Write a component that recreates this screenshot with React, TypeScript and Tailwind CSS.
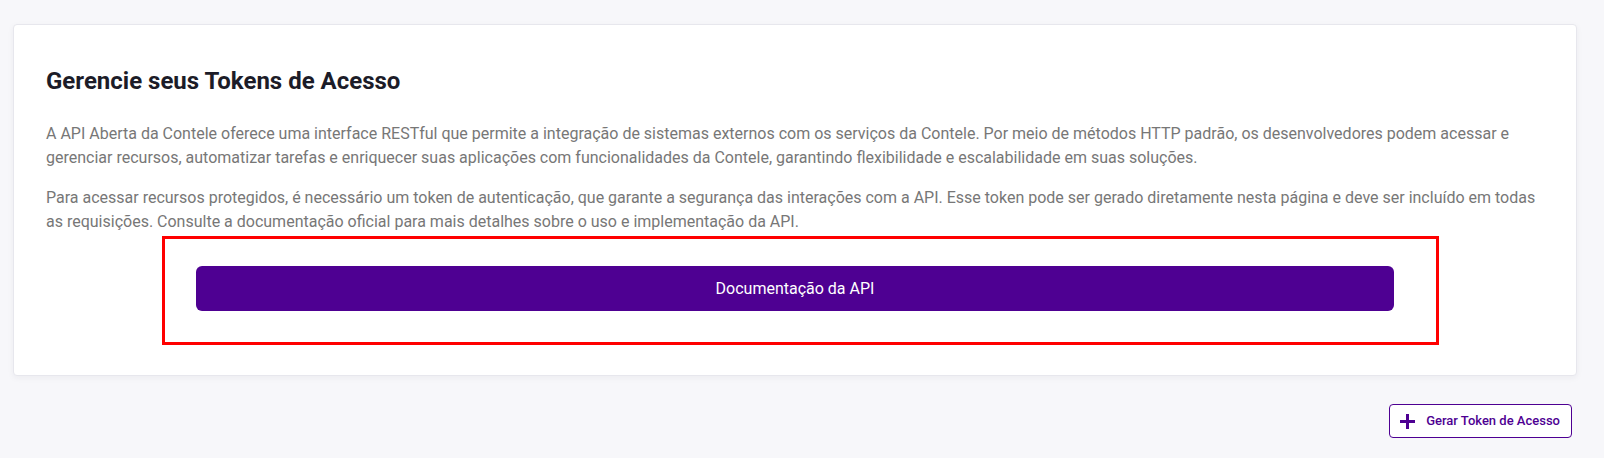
import React from 'react';

const PlusIcon = () => (
  <svg className="w-[15px] h-[15px]" viewBox="0 0 15 15" fill="none">
    <path d="M7.5 0v15M0 7.5h15" stroke="currentColor" strokeWidth={3} strokeLinecap="butt" />
  </svg>
);

export default function App() {
  return (
    <div className="min-h-[458px] bg-[#f7f7fa] pl-[13px] pr-[27px] pt-[24px] font-['Roboto',sans-serif]">
      <div className="relative bg-white border border-[#e7e7ed] rounded-[4px] shadow-[0_2px_6px_rgba(30,30,60,0.05)] px-8 pt-10 pb-10">
        <h1 className="text-[24px] leading-[32px] font-bold text-[#1c1c28]">Gerencie seus Tokens de Acesso</h1>
        <p className="mt-[25px] text-[16px] leading-[24px] text-[#777777]">
          A API Aberta da Contele oferece uma interface RESTful que permite a integração de sistemas externos com os serviços da Contele. Por meio de métodos HTTP padrão, os desenvolvedores podem acessar e gerenciar recursos, automatizar tarefas e enriquecer suas aplicações com funcionalidades da Contele, garantindo flexibilidade e escalabilidade em suas soluções.
        </p>
        <p className="mt-4 text-[16px] leading-[24px] text-[#777777]">
          Para acessar recursos protegidos, é necessário um token de autenticação, que garante a segurança das interações com a API. Esse token pode ser gerado diretamente nesta página e deve ser incluído em todas as requisições. Consulte a documentação oficial para mais detalhes sobre o uso e implementação da API.
        </p>
        <div className="mt-8 mb-6 flex justify-center">
          <button className="w-4/5 h-[45px] rounded-[6px] bg-[#4e0092] text-white text-[16px]">
            Documentação da API
          </button>
        </div>
        {/* red highlight annotation */}
        <div className="absolute left-[148px] top-[211px] w-[1277px] h-[109px] border-[3px] border-[#ff0000] pointer-events-none" />
      </div>
      <div className="flex justify-end mt-[28px] mr-[5px]">
        <button className="h-[34px] flex items-center gap-[11px] pl-[10px] pr-[11px] border border-[#4e0092] rounded-[4px] bg-white text-[#4e0092] text-[13px] font-medium">
          <PlusIcon />
          Gerar Token de Acesso
        </button>
      </div>
    </div>
  );
}
